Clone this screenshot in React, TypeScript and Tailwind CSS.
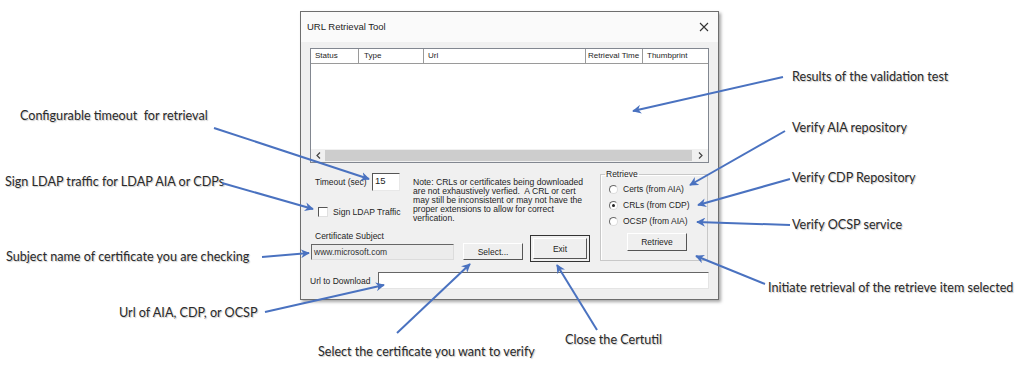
import React from 'react';

const labelCls = "absolute whitespace-nowrap font-['Lato','Open_Sans',sans-serif] text-[12.6px] leading-[16px] text-[#2a2a2a] [text-shadow:1px_1px_1px_rgba(0,0,0,0.22)]";

// annotation arrows: [x1, y1, x2, y2]
const ARROWS: [number, number, number, number][] = [
  [214, 128, 369, 179],
  [222, 183, 313, 209],
  [262, 257, 309, 253],
  [265, 312, 384, 285],
  [397, 333, 470, 264],
  [597, 330, 557, 265],
  [783, 77, 633, 111],
  [785, 131, 690, 185],
  [790, 179, 698, 205],
  [790, 225, 697, 222],
  [765, 284, 696, 256],
];

function Radio({ checked, label }: { checked?: boolean; label: string }) {
  return (
    <div className="flex items-center h-[16px] pl-[8px]">
      <span className="w-[9px] h-[9px] rounded-full border border-t-[#6a6a6a] border-l-[#6a6a6a] border-r-[#dcdcdc] border-b-[#dcdcdc] bg-white flex items-center justify-center">
        {checked && <span className="w-[3px] h-[3px] rounded-full bg-[#222]" />}
      </span>
      <span className="ml-[5px]">{label}</span>
    </div>
  );
}

function Dialog() {
  return (
    <div className="w-[419px] h-[289px] bg-[#f0f0f0] border border-[#6e6e6e] shadow-[2px_2px_3px_rgba(0,0,0,0.35)] flex flex-col font-['Liberation_Sans',sans-serif] text-[8.5px] leading-[10px] text-[#1e1e1e]">
      <div className="h-[30px] shrink-0 bg-[#fafafa] flex items-center justify-between pl-[6px] pr-[8px]">
        <span className="text-[9.5px]">URL Retrieval Tool</span>
        <svg width="10" height="10" viewBox="0 0 10 10" className="mr-[1px]">
          <path d="M1 1 L9 9 M9 1 L1 9" stroke="#333" strokeWidth="1.1" />
        </svg>
      </div>

      {/* list view */}
      <div className="mt-[6px] ml-[9px] w-[399px] h-[115px] shrink-0 border border-[#828790] bg-white flex flex-col">
        <div className="h-[15px] shrink-0 flex border-b border-[#9a9a9a] text-[8px] whitespace-nowrap">
          <div className="w-[48px] border-r border-[#9a9a9a] pl-[4px] flex items-center">Status</div>
          <div className="w-[65px] border-r border-[#9a9a9a] pl-[5px] flex items-center">Type</div>
          <div className="w-[162px] border-r border-[#9a9a9a] pl-[4px] flex items-center">Url</div>
          <div className="w-[57px] border-r border-[#9a9a9a] pl-[2px] flex items-center overflow-hidden">Retrieval Time</div>
          <div className="flex-1 pl-[4px] flex items-center">Thumbprint</div>
        </div>
        <div className="flex-1" />
        <div className="h-[13px] shrink-0 flex items-center bg-[#f0f0f0]">
          <span className="w-[14px] flex justify-center">
            <svg width="5" height="7" viewBox="0 0 5 7"><path d="M4 0.5 L1 3.5 L4 6.5" fill="none" stroke="#444" strokeWidth="1.2" /></svg>
          </span>
          <div className="flex-1 h-[11px] bg-[#cdcdcd]" />
          <span className="w-[16px] flex justify-center">
            <svg width="5" height="7" viewBox="0 0 5 7"><path d="M1 0.5 L4 3.5 L1 6.5" fill="none" stroke="#444" strokeWidth="1.2" /></svg>
          </span>
        </div>
      </div>

      {/* controls */}
      <div className="mt-[10px] pl-[9px] flex">
        <div className="w-[290px] flex flex-col">
          <div className="h-[58px] flex">
            <div className="w-[103px] flex flex-col">
              <div className="flex items-center pl-[5px] h-[18px]">
                <span className="w-[52px] whitespace-nowrap">Timeout (sec)</span>
                <div className="ml-[5px] w-[28px] h-[18px] bg-white border border-t-[#555] border-l-[#555] border-r-[#e8e8e8] border-b-[#e8e8e8] pl-[2px] pt-[2px] text-[9.5px]">15</div>
              </div>
              <div className="mt-[16px] flex items-center pl-[8px]">
                <span className="w-[10px] h-[10px] bg-white border border-t-[#555] border-l-[#555] border-r-[#e0e0e0] border-b-[#e0e0e0]" />
                <span className="ml-[5px] text-[8.6px] whitespace-nowrap">Sign LDAP Traffic</span>
              </div>
            </div>
            <p className="pt-[5px] text-[8.6px] leading-[9px]">
              Note: CRLs or certificates being downloaded<br />
              are not exhaustively verfied.&nbsp; A CRL or cert<br />
              may still be inconsistent or may not have the<br />
              proper extensions to allow for correct<br />
              verfication.
            </p>
          </div>
          <div className="h-[31px] flex items-end">
            <div className="flex flex-col pb-[2px]">
              <span className="pl-[5px]">Certificate Subject</span>
              <div className="mt-[3px] ml-[1px] w-[143px] h-[16px] bg-[#ececec] border border-t-[#666] border-l-[#666] border-r-[#dcdcdc] border-b-[#dcdcdc] flex items-center pl-[2px] text-[#333]">www.microsoft.com</div>
            </div>
            <button className="ml-[9px] mb-[2px] w-[60px] h-[17px] bg-[#efefef] border border-t-[#fff] border-l-[#fff] border-r-[#555] border-b-[#555] flex items-center justify-center">Select...</button>
            <div className="ml-[7px] w-[60px] h-[27px] border border-[#333] p-[2px] flex">
              <button className="flex-1 bg-[#efefef] border border-t-[#fff] border-l-[#fff] border-r-[#555] border-b-[#555] flex items-center justify-center">Exit</button>
            </div>
          </div>
        </div>
        <fieldset className="mt-[-4px] w-[108px] h-[92px] border border-[#c8c8c8] shadow-[inset_1px_1px_0_#fff] pt-[2px]">
          <legend className="ml-[4px] px-[1px]">Retrieve</legend>
          <Radio label="Certs (from AIA)" />
          <Radio checked label="CRLs (from CDP)" />
          <Radio label="OCSP (from AIA)" />
          <button className="mt-[4px] ml-[26px] w-[60px] h-[18px] bg-[#efefef] border border-t-[#fff] border-l-[#fff] border-r-[#555] border-b-[#555] flex items-center justify-center">Retrieve</button>
        </fieldset>
      </div>

      <div className="mt-[10px] pl-[9px] flex items-center h-[17px]">
        <span className="w-[68px] whitespace-nowrap">Url to Download</span>
        <div className="w-[331px] h-[17px] bg-white border border-t-[#666] border-l-[#666] border-r-[#e4e4e4] border-b-[#e4e4e4]" />
      </div>
    </div>
  );
}

export default function App() {
  return (
    <div className="relative w-[1024px] h-[375px] bg-white overflow-hidden">
      <div className="pl-[300px] pt-[11px]">
        <Dialog />
      </div>

      <span className={`${labelCls} left-[20px] top-[108px]`}>Configurable timeout&nbsp; for retrieval</span>
      <span className={`${labelCls} left-[5px] top-[174px]`}>Sign LDAP traffic for LDAP AIA or CDPs</span>
      <span className={`${labelCls} left-[6px] top-[249px]`}>Subject name of certificate you are checking</span>
      <span className={`${labelCls} left-[119px] top-[305px]`}>Url of AIA, CDP, or OCSP</span>
      <span className={`${labelCls} left-[318px] top-[344px]`}>Select the certificate you want to verify</span>
      <span className={`${labelCls} left-[565px] top-[332px]`}>Close the Certutil</span>
      <span className={`${labelCls} left-[792px] top-[69px]`}>Results of the validation test</span>
      <span className={`${labelCls} left-[792px] top-[120px]`}>Verify AIA repository</span>
      <span className={`${labelCls} left-[792px] top-[170px]`}>Verify CDP Repository</span>
      <span className={`${labelCls} left-[792px] top-[217px]`}>Verify OCSP service</span>
      <span className={`${labelCls} left-[768px] top-[280px]`}>Initiate retrieval of the retrieve item selected</span>

      <svg className="absolute inset-0 pointer-events-none" width="1024" height="375" viewBox="0 0 1024 375">
        <defs>
          <marker id="ah" viewBox="0 0 10 10" refX="9" refY="5" markerWidth="4.5" markerHeight="4.5" orient="auto">
            <path d="M0 0 L10 5 L0 10 L3 5 Z" fill="#4a72c0" />
          </marker>
        </defs>
        {ARROWS.map(([x1, y1, x2, y2], i) => (
          <line key={i} x1={x1} y1={y1} x2={x2} y2={y2} stroke="#4a72c0" strokeWidth="2" markerEnd="url(#ah)" />
        ))}
      </svg>
    </div>
  );
}
